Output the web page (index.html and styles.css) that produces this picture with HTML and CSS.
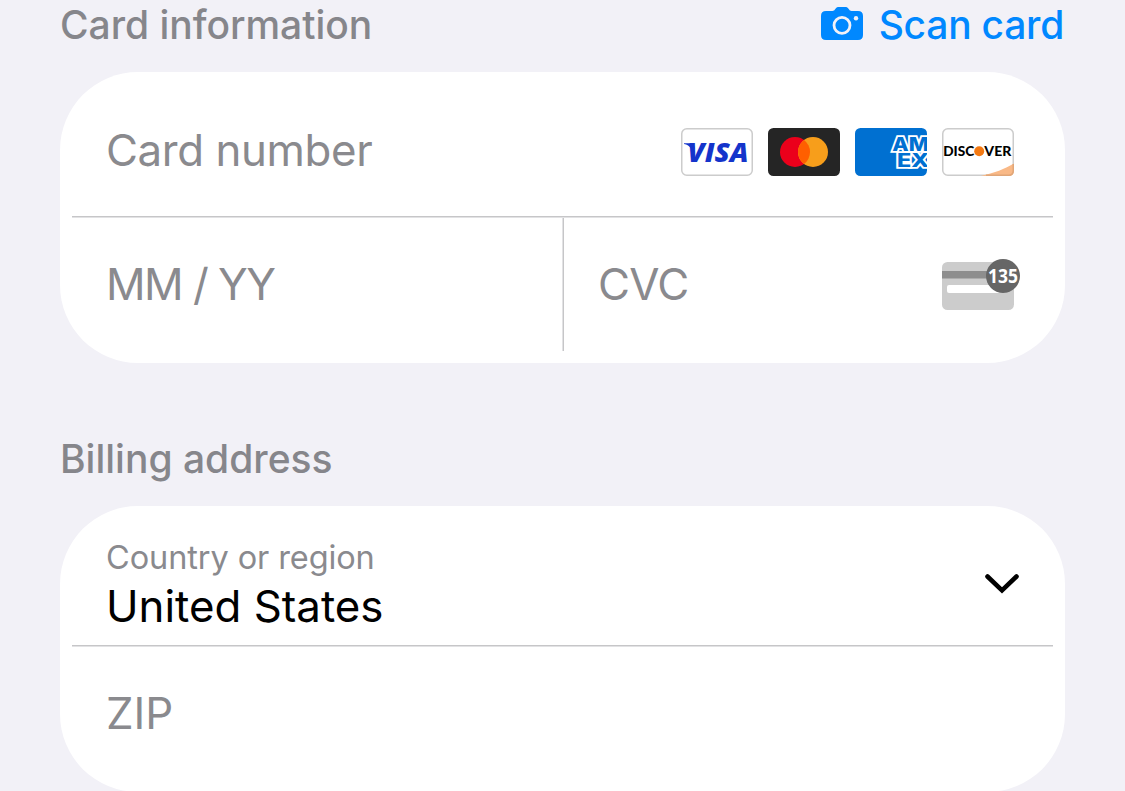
FILE: index.html
```html
<!DOCTYPE html>
<html lang="en">
<head>
<meta charset="utf-8">
<title>Payment details</title>
<link rel="stylesheet" href="styles.css">
</head>
<body>
<main class="form">
  <header class="section-head">
    <h2 class="title title-card">Card information</h2>
    <a class="scan">
      <svg class="camera" width="44" height="36" viewBox="0 0 44 36">
        <path fill="#0088ff" d="M6 5h6.500c1.200 0 1.700-.4 2.400-1.400l.8-1.100C16.600 1.300 17.500 1 19 1h6c1.500 0 2.400.3 3.300 1.500l.8 1.100C29.800 4.600 30.300 5 31.500 5H38c3.300 0 5 1.700 5 5v19c0 3.300-1.700 5-5 5H6c-3.300 0-5-1.700-5-5V10c0-3.300 1.700-5 5-5z"/>
        <circle cx="22" cy="19.300" r="8" fill="none" stroke="#f2f1f7" stroke-width="2.800"/>
        <circle cx="36" cy="12.300" r="2.200" fill="#f2f1f7"/>
      </svg>
      <span class="scan-label">Scan card</span>
    </a>
  </header>

  <section class="panel">
    <div class="row row-number">
      <span class="placeholder ph-number">Card number</span>
      <div class="brands">
        <svg width="72" height="48" viewBox="0 0 72 48">
          <rect x=".75" y=".75" width="70.500" height="46.500" rx="5" fill="#fff" stroke="#ccc" stroke-width="1.500"/>
          <path fill="#1434cb" d="M3 15.200h9.500l1 5-3.200.5C8.500 17.800 6 16.500 3 15.900z"/>
          <text class="visa" x="6.500" y="34.200" textLength="61" lengthAdjust="spacingAndGlyphs">VISA</text>
        </svg>
        <svg width="72" height="48" viewBox="0 0 72 48">
          <rect width="72" height="48" rx="5.500" fill="#252525"/>
          <circle cx="27" cy="24" r="15" fill="#eb001b"/>
          <circle cx="45" cy="24" r="15" fill="#f79e1b"/>
          <path fill="#ff5f00" d="M36 12a15 15 0 0 1 0 24 15 15 0 0 1 0-24z"/>
        </svg>
        <svg width="72" height="48" viewBox="0 0 72 48">
          <rect width="72" height="48" rx="5.500" fill="#0070d1"/>
          <text class="amex"><tspan x="37.300" y="23.300" textLength="36.500" lengthAdjust="spacingAndGlyphs">AM</tspan><tspan x="42" y="39" textLength="32" lengthAdjust="spacingAndGlyphs">EX</tspan></text>
        </svg>
        <svg width="72" height="48" viewBox="0 0 72 48">
          <rect x=".75" y=".75" width="70.500" height="46.500" rx="5" fill="#fff" stroke="#ccc" stroke-width="1.500"/>
          <path fill="#f9b987" d="M39 48C52 45 63 41 72 35.500v7c0 3.500-2 5.500-5.500 5.500z"/>
          <path fill="none" stroke="#e0a678" stroke-width="1.500" d="M44 47.250h22.500q4.750 0 4.750-4.750V36"/>
          <g class="discover">
            <text x="1.200" y="28.200" textLength="31" lengthAdjust="spacingAndGlyphs">DISC</text>
            <text x="42.300" y="28.200" textLength="27" lengthAdjust="spacingAndGlyphs">VER</text>
          </g>
          <circle cx="37.200" cy="23.200" r="5" fill="#f47912"/>
        </svg>
      </div>
    </div>
    <div class="line"></div>
    <div class="split">
      <div class="row row-half"><span class="placeholder ph-date">MM / YY</span></div>
      <div class="divider"></div>
      <div class="row row-half row-cvc">
        <span class="placeholder ph-cvc">CVC</span>
        <svg class="cvc-card" width="80" height="52" viewBox="0 0 80 52">
          <rect y="4" width="72" height="48" rx="5.500" fill="#ccc"/>
          <path fill="#8e8e8e" d="M0 13h72v7.500H0z"/>
          <rect x="5" y="27" width="60" height="8" rx="2" fill="#fff"/>
          <circle cx="61" cy="18" r="17" fill="#666"/>
          <text class="cvc-digits" x="46" y="25" textLength="30" lengthAdjust="spacingAndGlyphs">135</text>
        </svg>
      </div>
    </div>
  </section>

  <h2 class="title title-billing">Billing address</h2>

  <section class="panel panel-billing">
    <div class="row row-country">
      <div>
        <div class="label">Country or region</div>
        <div class="value">United States</div>
      </div>
      <svg class="chevron" width="36" height="22" viewBox="0 0 36 22">
        <path d="M3.500 3.500 18 17.300 32.500 3.500" fill="none" stroke="#000" stroke-width="4.600" stroke-linecap="round"/>
      </svg>
    </div>
    <div class="line"></div>
    <div class="row row-zip"><span class="placeholder ph-zip">ZIP</span></div>
  </section>
</main>
</body>
</html>
```
FILE: styles.css
```css
* { box-sizing: border-box; }
body {
  margin: 0;
  background: #f2f1f7;
  font-family: Inter, "Liberation Sans", sans-serif;
  overflow: hidden;
}
svg { display: block; flex: none; }
.form { width: 1125px; padding: 0 60px; }
.section-head {
  height: 72px;
  display: flex;
  justify-content: space-between;
  align-items: flex-start;
}
.title {
  margin: 0;
  color: #86868b;
  font-size: 39px;
  line-height: 48px;
  font-weight: 550;
  white-space: nowrap;
}
.title-card { padding-top: 1px; letter-spacing: -0.030px; }
.title-billing { height: 143px; padding-top: 72px; letter-spacing: 0; }
.scan { display: flex; padding: 6px 1px 0 0; gap: 15px; color: #0088ff; }
.scan-label {
  margin-top: -5px;
  font-size: 39px;
  line-height: 48px;
  font-weight: 500;
  letter-spacing: -0.250px;
  white-space: nowrap;
}
.panel {
  height: 291px;
  padding: 0 12px;
  border-radius: 78px;
  background: #fff;
}
.panel-billing { height: 286px; }
.row { display: flex; justify-content: space-between; padding: 0 39px 0 34px; }
.row-number { height: 144px; padding-top: 56px; }
.placeholder, .value {
  font-size: 43.800px;
  line-height: 48px;
  white-space: nowrap;
}
.placeholder { color: #8a8a8e; }
.ph-number { margin-top: -1px; letter-spacing: -0.380px; }
.ph-date { margin-top: 1px; letter-spacing: -1.500px; }
.ph-cvc { margin-top: 1px; letter-spacing: -0.700px; }
.brands { display: flex; gap: 15px; }
.visa { font: italic 800 26.500px "Open Sans", sans-serif; fill: #1434cb; }
.amex {
  font: 800 18.500px Inter, sans-serif;
  fill: #0070d1;
  stroke: #fff;
  stroke-width: 3.400px;
  paint-order: stroke;
}
.discover { font: 900 14px Lato, sans-serif; }
.line { height: 2px; background: linear-gradient(#c6c6c8 50%, #e2e2e4 50%); }
.split { display: flex; height: 133px; }
.row-half { width: 490px; padding-top: 42px; }
.divider { width: 2px; background: linear-gradient(90deg, #e2e2e4 50%, #c6c6c8 50%); }
.row-cvc { width: 489px; padding-right: 31px; }
.cvc-card { margin-top: -2px; }
.cvc-digits { font: 700 19.500px "Noto Sans", sans-serif; fill: #fff; }
.row-country { height: 139px; padding-top: 34px; }
.label { color: #8a8a8e; font-size: 32.500px; line-height: 36px; letter-spacing: -0.100px; white-space: nowrap; }
.value { margin-top: 7px; color: #000; }
.chevron { margin-top: 33px; margin-right: -6px; }
.row-zip { padding-top: 43px; }
```
